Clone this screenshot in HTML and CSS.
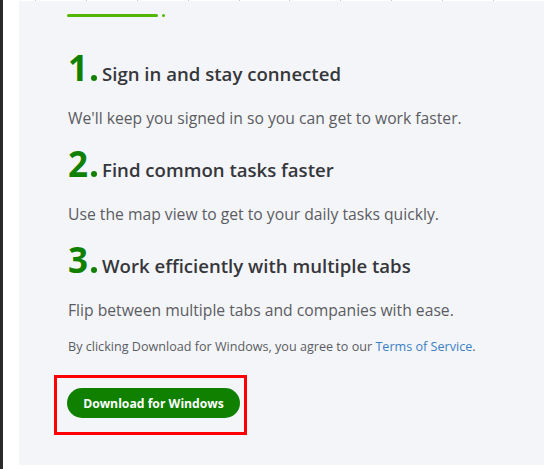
FILE: index.html
```html
<!DOCTYPE html>
<html lang="en">
<head>
<meta charset="utf-8">
<title>Download for Windows</title>
<link rel="stylesheet" href="styles.css">
</head>
<body>
<div class="frame">
  <div class="edge"></div>
  <div class="main">
    <div class="ticks"></div>
    <section class="panel">
      <div class="progress"><span class="bar"></span><span class="dot"></span></div>
      <div class="steps">
        <div class="step">
          <h2 class="step-title"><span class="num">1<span class="period"></span></span><span class="label">Sign in and stay connected</span></h2>
          <p class="step-text">We'll keep you signed in so you can get to work faster.</p>
        </div>
        <div class="step">
          <h2 class="step-title"><span class="num">2<span class="period"></span></span><span class="label">Find common tasks faster</span></h2>
          <p class="step-text">Use the map view to get to your daily tasks quickly.</p>
        </div>
        <div class="step">
          <h2 class="step-title"><span class="num">3<span class="period"></span></span><span class="label">Work efficiently with multiple tabs</span></h2>
          <p class="step-text">Flip between multiple tabs and companies with ease.</p>
        </div>
      </div>
      <p class="legal">By clicking Download for Windows, you agree to our <a class="link" href="#">Terms of Service</a>.</p>
      <div class="highlight">
        <button class="download" type="button">Download for Windows</button>
      </div>
    </section>
  </div>
</div>
</body>
</html>
```
FILE: styles.css
```css
* { box-sizing: border-box; }
html, body { margin: 0; padding: 0; background: #ffffff; }
body { font-family: "Open Sans", "Noto Sans", sans-serif; width: 544px; height: 469px; overflow: hidden; }

.frame { display: flex; height: 469px; }
.edge { width: 3px; background: #2a2a2a; flex: none; }
.main { flex: 1; margin-left: 16px; display: flex; flex-direction: column; }

.ticks {
  height: 1px;
  margin-left: 16px;
  background: repeating-linear-gradient(to right, #c9c9c9 0 1px, transparent 1px 50.9px);
}

.panel {
  background: #f4f5f9;
  height: 464px;
  padding: 13px 0 0 49px;
}

.progress { display: flex; align-items: center; gap: 4px; height: 3px; margin-left: -1px; }
.bar { width: 91px; height: 3px; background: #53b700; border-radius: 2px; }
.dot { width: 3px; height: 3px; background: #53b700; border-radius: 50%; }

.steps { display: flex; flex-direction: column; margin-top: 33px; }

.step-title {
  margin: 0;
  height: 30px;
  display: flex;
  align-items: baseline;
  color: #36373a;
}
.num {
  font-size: 35px;
  font-weight: 700;
  color: #108000;
  line-height: 1;
  display: flex;
  align-items: baseline;
}
.period {
  width: 6px; height: 6px; border-radius: 50%;
  background: #108000;
  margin: 0 5px 4px 3px;
  align-self: flex-end;
}
.label { font-size: 18.6px; font-weight: 600; }

.step-text {
  margin: 27px 0 17px;
  font-size: 15.7px;
  color: #5b5c61;
}

.legal { margin: 0; font-size: 12.6px; color: #5b5c61; }
.link { color: #3b7fc4; text-decoration: none; }

.highlight {
  margin: 20px 0 0 -14px;
  width: 193px;
  height: 60px;
  border: 3px solid #ff0000;
  padding: 10px 0 0 10px;
}
.download {
  width: 173px; height: 30px;
  border: none; border-radius: 15px;
  background: #108000;
  color: #ffffff;
  font-family: "Open Sans", sans-serif;
  font-size: 12.2px; font-weight: 700;
  padding: 0;
}
```
